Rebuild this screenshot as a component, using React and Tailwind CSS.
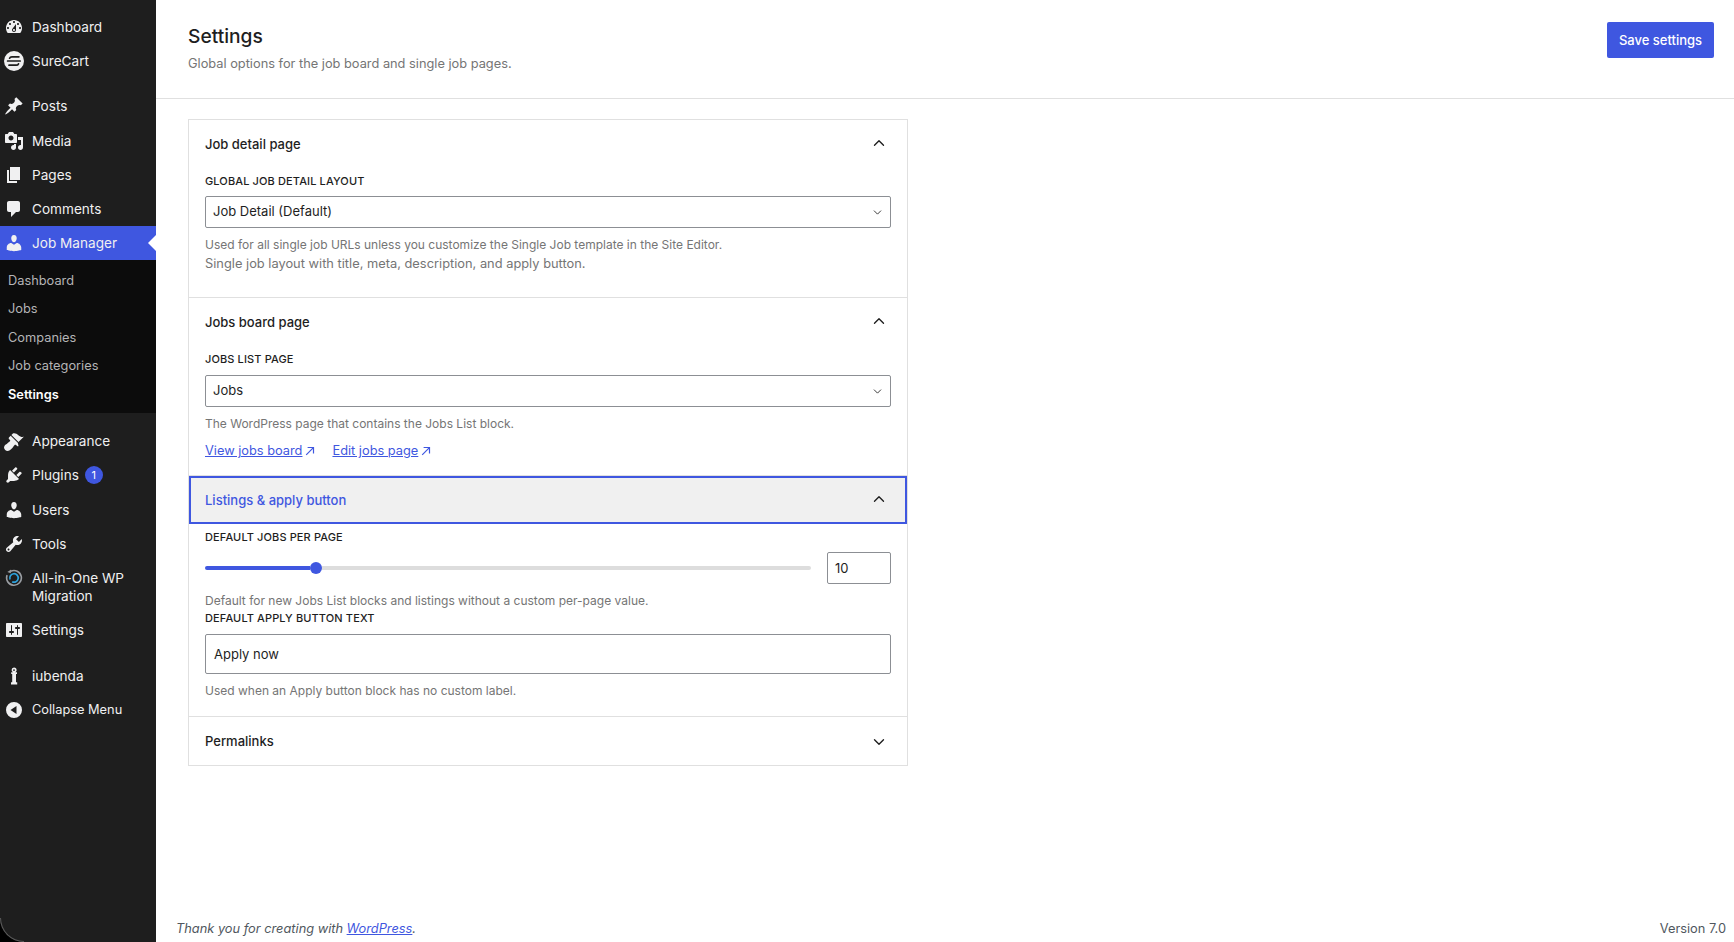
import { ChevronUp, ChevronDown } from 'lucide-react'

const PATHS = {
  dashboard: 'M3.76 16h12.48c1.1-1.37 1.76-3.11 1.76-5 0-4.42-3.58-8-8-8s-8 3.58-8 8c0 1.89.66 3.63 1.76 5zM10 4c.55 0 1 .45 1 1s-.45 1-1 1-1-.45-1-1 .45-1 1-1zM6 6c.55 0 1 .45 1 1s-.45 1-1 1-1-.45-1-1 .45-1 1-1zm8 0c.55 0 1 .45 1 1s-.45 1-1 1-1-.45-1-1 .45-1 1-1zm-5.37 5.55L12 7v6c0 1.1-.9 2-2 2s-2-.9-2-2c0-.57.24-1.08.63-1.45zM4 10c.55 0 1 .45 1 1s-.45 1-1 1-1-.45-1-1 .45-1 1-1zm12 0c.55 0 1 .45 1 1s-.45 1-1 1-1-.45-1-1 .45-1 1-1zm-5 3c0-.55-.45-1-1-1s-1 .45-1 1 .45 1 1 1 1-.45 1-1z',
  posts: 'M10.44 3.02l1.82-1.82 6.36 6.35-1.83 1.82c-1.05-.68-2.48-.57-3.41.36l-.75.75c-.92.93-1.04 2.35-.35 3.41l-1.83 1.82-2.41-2.41-2.8 2.79c-.42.42-3.38 2.71-3.8 2.29s1.86-3.39 2.28-3.81l2.79-2.79L4.1 9.36l1.83-1.82c1.05.69 2.48.57 3.4-.36l.75-.75c.93-.92 1.05-2.35.36-3.41z',
  media: 'M13 11V4c0-.55-.45-1-1-1h-1.67L9 1H5L3.67 3H2c-.55 0-1 .45-1 1v7c0 .55.45 1 1 1h10c.55 0 1-.45 1-1zM7 4.5c1.38 0 2.5 1.12 2.5 2.5S8.38 9.5 7 9.5 4.5 8.38 4.5 7 5.62 4.5 7 4.5zM14 6h5v10.5c0 1.38-1.12 2.5-2.5 2.5S14 17.88 14 16.5s1.12-2.5 2.5-2.5c.17 0 .34.02.5.05V9h-3V6zm-4 8.05V13h2v3.5c0 1.38-1.12 2.5-2.5 2.5S7 17.88 7 16.5 8.12 14 9.5 14c.17 0 .34.02.5.05z',
  pages: 'M6 15V2h10v13H6zm-1 1h8v2H3V5h2v11z',
  comments: 'M5 2h9c1.1 0 2 .9 2 2v7c0 1.1-.9 2-2 2h-2l-5 5v-5H5c-1.1 0-2-.9-2-2V4c0-1.1.9-2 2-2z',
  users: 'M10 9.25c-2.27 0-2.73-3.44-2.73-3.44C7 4.02 7.82 2 9.97 2c2.16 0 2.98 2.02 2.71 3.81 0 0-.41 3.44-2.68 3.44zm0 2.57L12.72 10c2.39 0 4.52 2.33 4.52 4.53v2.49s-3.65 1.13-7.24 1.13c-3.65 0-7.24-1.13-7.24-1.13v-2.49c0-2.25 1.94-4.48 4.47-4.48z',
  appearance: 'M14.48 11.06L7.41 3.99l1.5-1.5c.5-.56 2.3-.47 3.51.32 1.21.8 1.43 1.28 2.91 2.1 1.18.64 2.45 1.26 4.45.85zm-.71.71L6.7 4.7 4.93 6.47c-.39.39-.39 1.02 0 1.41l1.06 1.06c.39.39.39 1.03 0 1.42-.6.6-1.43 1.11-2.21 1.69-.35.26-.7.53-1.01.84C1.43 13.23 0 15 0 16.41 0 18 1.98 20 3.56 20c1.4 0 3.18-1.45 4.54-2.77.32-.31.59-.66.85-1.02.58-.77 1.09-1.61 1.69-2.21.39-.39 1.02-.39 1.41 0l1.06 1.06c.39.39 1.02.39 1.41 0z',
  plugins: 'M13.11 4.36L9.87 7.6 8 5.73l3.24-3.24c.35-.34 1.05-.2 1.56.32.52.51.66 1.21.31 1.55zm-8 1.77l.91-1.12 9.01 9.01-1.19.84c-.71.71-2.63 1.16-3.82 1.16H6.14L4.9 17.26c-.59.59-1.54.59-2.12 0-.59-.58-.59-1.53 0-2.12l1.24-1.24v-3.88c0-1.13.4-3.19 1.09-3.89zm7.26 3.97l3.24-3.24c.34-.35 1.04-.21 1.55.31.52.51.66 1.21.31 1.55l-3.24 3.25z',
  tools: 'M16.68 9.77c-1.34 1.34-3.3 1.67-4.95.99l-5.41 6.52c-.99.99-2.59.99-3.58 0s-.99-2.59 0-3.57l6.52-5.42c-.68-1.65-.35-3.61.99-4.95 1.28-1.28 3.12-1.62 4.72-1.06l-2.89 2.89 2.82 2.82 2.86-2.87c.53 1.58.18 3.39-1.08 4.65zM3.81 16.21c.4.39 1.04.39 1.43 0 .4-.4.4-1.04 0-1.43-.39-.4-1.03-.4-1.43 0-.39.39-.39 1.03 0 1.43z',
  settings: 'M18 16V4c0-.55-.45-1-1-1H3c-.55 0-1 .45-1 1v12c0 .55.45 1 1 1h14c.55 0 1-.45 1-1zM8 11h1c.55 0 1 .45 1 1s-.45 1-1 1H8v1.5c0 .28-.22.5-.5.5s-.5-.22-.5-.5V13H6c-.55 0-1-.45-1-1s.45-1 1-1h1V5.5c0-.28.22-.5.5-.5s.5.22.5.5V11zm5-2h-1c-.55 0-1-.45-1-1s.45-1 1-1h1V5.5c0-.28.22-.5.5-.5s.5.22.5.5V7h1c.55 0 1 .45 1 1s-.45 1-1 1h-1v5.5c0 .28-.22.5-.5.5s-.5-.22-.5-.5V9z',
  iubenda: 'M10 1.5a2.6 2.6 0 0 1 2.6 2.6c0 1-.5 1.8-1.3 2.2h1.7v1.6h-1v8.4h1.2v2.2H7v-2.2h1.2V7.9h-1V6.3h1.7a2.6 2.6 0 0 1-1.3-2.2A2.6 2.6 0 0 1 10 1.5zm0 1.7a.9.9 0 1 0 0 1.8.9.9 0 0 0 0-1.8z',
  collapse: 'M10 2a8 8 0 1 1 0 16 8 8 0 0 1 0-16zM12.5 6 6.5 10l6 4z',
}

function DashIcon({ name }) {
  return (
    <svg viewBox="0 0 20 20" className="w-[20px] h-[20px] text-[#f0f0f1]" fill="currentColor">
      <path d={PATHS[name]} fillRule="evenodd" />
    </svg>
  )
}

function SureCartIcon() {
  return (
    <svg viewBox="0 0 20 20" className="w-[20px] h-[20px] shrink-0">
      <circle cx="10" cy="10" r="10" fill="#f0f0f1" />
      <path d="M5.6 7.2c.4-1 1.2-1.4 2.3-1.4h7M3.6 10h12.6M5 14.2h7.2c1.1 0 1.9-.5 2.3-1.4" stroke="#1e1e1e" strokeWidth="1.7" fill="none" strokeLinecap="round" />
    </svg>
  )
}

function MigrationIcon() {
  return (
    <svg viewBox="0 0 20 20" className="w-[18px] h-[18px]" fill="none">
      <path d="M6.2 2.6A8.2 8.2 0 1 1 2.4 6.8" stroke="#9a9ea3" strokeWidth="1.8" />
      <path d="M6.8 0.6 6.4 4.8 2.6 3.4z" fill="#9a9ea3" />
      <path d="M5.6 11.6A4.7 4.7 0 1 1 8 14.2" stroke="#2ea2dc" strokeWidth="1.9" />
    </svg>
  )
}

function MenuItem({ icon, label, active, badge, small, className = '' }) {
  return (
    <div className={`flex items-center h-[34px] relative ${active ? 'bg-[#3f57e0]' : ''} ${className}`}>
      <div className="w-[28px] mr-[4px] flex justify-center shrink-0">
        {icon === 'surecart' ? <SureCartIcon /> : <DashIcon name={icon} />}
      </div>
      <span className={small ? 'text-[12.8px] leading-[18px] text-[#f0f0f1]' : 'text-[13.6px] leading-[18px] text-[#f0f0f1]'}>{label}</span>
      {badge && (
        <span className="ml-[6px] w-[18px] h-[18px] rounded-full bg-[#3f57e0] text-white text-[11px] flex items-center justify-center">{badge}</span>
      )}
      {active && <div className="absolute right-0 top-[9px] border-y-[8px] border-y-transparent border-r-[8px] border-r-white" />}
    </div>
  )
}

const SUB = ['Dashboard', 'Jobs', 'Companies', 'Job categories']

function Sidebar() {
  return (
    <aside className="relative w-[156px] shrink-0 bg-[#1e1e1e] rounded-bl-[24px] pt-[10px]">
      <MenuItem icon="dashboard" label="Dashboard" />
      <MenuItem icon="surecart" label="SureCart" />
      <MenuItem icon="posts" label="Posts" className="mt-[11px]" />
      <MenuItem icon="media" label="Media" className="mt-px" />
      <MenuItem icon="pages" label="Pages" />
      <MenuItem icon="comments" label="Comments" />
      <MenuItem icon="users" label="Job Manager" active />
      <div className="bg-[#0c0c0c] h-[153px] pt-[6px] pl-[8px]">
        {SUB.map(s => (
          <div key={s} className="h-[28.5px] flex items-center text-[12.8px] text-[#b4b4b6]">{s}</div>
        ))}
        <div className="h-[28.5px] flex items-center text-[12.8px] font-semibold text-white">Settings</div>
      </div>
      <MenuItem icon="appearance" label="Appearance" className="mt-[11px]" />
      <MenuItem icon="plugins" label="Plugins" badge="1" />
      <MenuItem icon="users" label="Users" className="mt-px" />
      <MenuItem icon="tools" label="Tools" />
      <div className="flex h-[52px] pt-[8px]">
        <div className="w-[28px] mr-[4px] flex justify-center shrink-0"><MigrationIcon /></div>
        <span className="text-[13.6px] leading-[18px] text-[#f0f0f1]">All-in-One WP<br />Migration</span>
      </div>
      <MenuItem icon="settings" label="Settings" />
      <MenuItem icon="iubenda" label="iubenda" className="mt-[12px]" />
      <MenuItem icon="collapse" label="Collapse Menu" small />
      <div className="absolute left-0 bottom-0 w-[24px] h-[24px] border-l border-b border-[#5a5a5a] rounded-bl-[24px]" />
    </aside>
  )
}

function Label({ children }) {
  return <div className="text-[11px] leading-[16px] font-medium uppercase tracking-[0.12px] text-[#1e1e1e]">{children}</div>
}

function Help({ children, className = '' }) {
  return <p className={`text-[12px] leading-[19px] text-[#757575] ${className}`}>{children}</p>
}

function SelectBox({ value, className = '' }) {
  return (
    <div className={`h-[32px] border border-[#8c8f94] rounded-[2px] pl-[7px] pr-[6px] flex items-center justify-between text-[13px] text-[#1e1e1e] ${className}`}>
      <span>{value}</span>
      <ChevronDown size={13} strokeWidth={1.6} />
    </div>
  )
}

function SectionHeader({ title, open = true, focused }) {
  if (focused) {
    return (
      <div className="h-[48px] pt-px border-2 border-[#3f57e0] bg-[#f0f0f0] pl-[14px] pr-[17px] flex items-center justify-between text-[#3f57e0]">
        <span className="text-[13px] font-medium">{title}</span>
        <ChevronUp size={18} strokeWidth={1.8} className="text-[#1e1e1e] -mt-[3px]" />
      </div>
    )
  }
  const Chevron = open ? ChevronUp : ChevronDown
  return (
    <div className="h-[48px] pt-[2px] pl-[16px] pr-[19px] flex items-center justify-between text-[#1e1e1e]">
      <span className="text-[13px] font-medium">{title}</span>
      <Chevron size={18} strokeWidth={1.8} className={open ? '-mt-[4px]' : ''} />
    </div>
  )
}

function LinkOut({ children }) {
  return (
    <a className="text-[12.8px] text-[#3f57e0] flex items-center gap-[3px]">
      <span className="underline">{children}</span>
      <svg viewBox="0 0 10 10" className="w-[10px] h-[10px]" fill="none" stroke="currentColor" strokeWidth="1.2">
        <path d="M1.2 8.8 8.4 1.6M2.6 1.5h5.9v5.9" />
      </svg>
    </a>
  )
}

export default function App() {
  return (
    <div className="h-[942px] flex bg-black overflow-hidden font-[Inter,sans-serif]">
      <Sidebar />
      <main className="flex-1 bg-white flex flex-col">
        <header className="h-[99px] border-b border-[#e0e0e0] pl-[32px] pr-[20px] flex justify-between pt-[22px]">
          <div>
            <h1 className="text-[19.2px] leading-[28px] font-medium text-[#1e1e1e]">Settings</h1>
            <p className="text-[12.8px] leading-[18px] mt-[5px] text-[#757575]">Global options for the job board and single job pages.</p>
          </div>
          <button className="h-[36px] w-[107px] pt-px bg-[#3f57e0] rounded-[2px] text-white text-[13px] font-medium">Save settings</button>
        </header>

        <div className="pl-[32px] pt-[20px]">
          <div className="w-[720px] border border-[#e0e0e0]">
            <section className="h-[178px] border-b border-[#e0e0e0]">
              <SectionHeader title="Job detail page" />
              <div className="px-[16px] pt-[5px]">
                <Label>Global job detail layout</Label>
                <SelectBox value="Job Detail (Default)" className="mt-[7px]" />
                <Help className="mt-[7px]">Used for all single job URLs unless you customize the Single Job template in the Site Editor.</Help>
                <p className="text-[12.85px] leading-[19px] text-[#757575]">Single job layout with title, meta, description, and apply button.</p>
              </div>
            </section>

            <section className="h-[178px] border-b border-[#e0e0e0]">
              <SectionHeader title="Jobs board page" />
              <div className="px-[16px] pt-[5px]">
                <Label>Jobs list page</Label>
                <SelectBox value="Jobs" className="mt-[8px]" />
                <Help className="mt-[7px]">The WordPress page that contains the Jobs List block.</Help>
                <div className="flex gap-[17px] mt-[8px]">
                  <LinkOut>View jobs board</LinkOut>
                  <LinkOut>Edit jobs page</LinkOut>
                </div>
              </div>
            </section>

            <section className="h-[241px] border-b border-[#e0e0e0]">
              <SectionHeader title="Listings &amp; apply button" focused />
              <div className="px-[16px] pt-[5px]">
                <Label>Default jobs per page</Label>
                <div className="flex items-center gap-[16px] mt-[7px]">
                  <div className="flex-1 flex items-center">
                    <div className="w-[105px] h-[4px] bg-[#3f57e0] rounded-l-full" />
                    <div className="w-[12px] h-[12px] rounded-full bg-[#3f57e0] shrink-0" />
                    <div className="flex-1 h-[4px] bg-[#dddddd] rounded-r-full" />
                  </div>
                  <div className="w-[64px] h-[32px] pt-px border border-[#8c8f94] rounded-[2px] pl-[7px] flex items-center text-[13px] text-[#1e1e1e]">10</div>
                </div>
                <Help className="mt-[7px]">Default for new Jobs List blocks and listings without a custom per-page value.</Help>
                <Label>Default apply button text</Label>
                <div className="h-[40px] pt-px mt-[8px] border border-[#8c8f94] rounded-[2px] pl-[8px] flex items-center text-[13px] text-[#1e1e1e]">Apply now</div>
                <Help className="mt-[7px]">Used when an Apply button block has no custom label.</Help>
              </div>
            </section>

            <SectionHeader title="Permalinks" open={false} />
          </div>
        </div>

        <footer className="mt-auto h-[22px] pl-[20px] pr-[8px] flex justify-between text-[12.8px] leading-[18px] text-[#50575e]">
          <span className="italic">Thank you for creating with <a className="underline text-[#3f57e0]">WordPress</a>.</span>
          <span>Version 7.0</span>
        </footer>
      </main>
    </div>
  )
}
